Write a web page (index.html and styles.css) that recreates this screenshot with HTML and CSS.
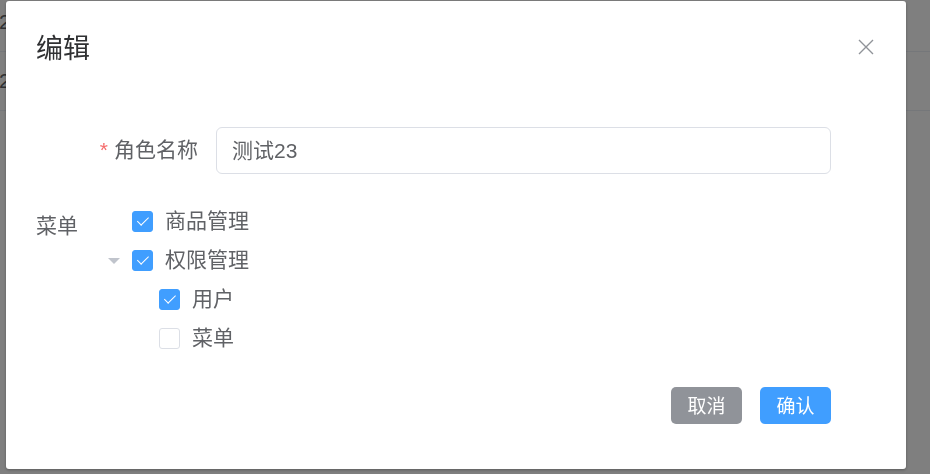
FILE: index.html
```html
<!DOCTYPE html>
<html lang="zh-CN">
<head>
<meta charset="utf-8">
<title>编辑</title>
<link rel="stylesheet" href="styles.css">
</head>
<body>
<div class="page">
  <div class="table">
    <div class="row"><span class="cell">2021-03-12 10:20:31</span></div>
    <div class="row"><span class="cell">2021-03-14 09:12:05</span></div>
  </div>
</div>
<div class="overlay">
  <div class="dialog">
    <div class="dialog-header">
      <span class="dialog-title">编辑</span>
      <button class="close-btn" aria-label="关闭">
        <svg width="16" height="16" viewBox="0 0 16 16"><path d="M1 1L15 15M15 1L1 15" stroke="#909399" stroke-width="1.4" fill="none"/></svg>
      </button>
    </div>
    <div class="dialog-body">
      <div class="form-item">
        <label class="form-label"><span class="req">*</span>角色名称</label>
        <div class="input"><span class="input-text">测试23</span></div>
      </div>
      <div class="menu-item">
        <span class="menu-label">菜单</span>
        <div class="tree">
          <div class="node">
            <span class="expand leaf"></span>
            <span class="cb checked"></span>
            <span class="node-label">商品管理</span>
          </div>
          <div class="node">
            <span class="expand"></span>
            <span class="cb checked"></span>
            <span class="node-label">权限管理</span>
          </div>
          <div class="node level2">
            <span class="expand leaf"></span>
            <span class="cb checked"></span>
            <span class="node-label">用户</span>
          </div>
          <div class="node level2">
            <span class="expand leaf"></span>
            <span class="cb"></span>
            <span class="node-label">菜单</span>
          </div>
        </div>
      </div>
      <div class="dialog-footer">
        <button class="btn btn-info"><span class="btn-text">取消</span></button>
        <button class="btn btn-primary"><span class="btn-text">确认</span></button>
      </div>
    </div>
  </div>
</div>
</body>
</html>
```

FILE: styles.css
```css
* { box-sizing: border-box; }

html, body {
  margin: 0;
  padding: 0;
  background: #ffffff;
  font-family: "Liberation Sans", "Noto Sans CJK SC", sans-serif;
  overflow: hidden;
}

.page {
  width: 930px;
  height: 474px;
}

.table {
  margin-top: -7px;
}

.row {
  height: 59px;
  border-bottom: 1px solid #ebeef5;
  display: flex;
  align-items: center;
}

.cell {
  font-size: 21px;
  color: #606266;
  margin-left: -1px;
}

.overlay {
  position: fixed;
  inset: 0;
  background: rgba(0, 0, 0, 0.5);
}

.dialog {
  position: absolute;
  left: 6px;
  top: 1px;
  width: 900px;
  height: 468px;
  background: #ffffff;
  border-radius: 3px;
  box-shadow: 0 1px 3px rgba(0, 0, 0, 0.3);
}

.dialog-header {
  display: flex;
  justify-content: space-between;
  align-items: flex-start;
  padding: 30px 28px 15px 30px;
}

.dialog-title {
  font-size: 27px;
  line-height: 36px;
  color: #303133;
}

.close-btn {
  width: 24px;
  height: 24px;
  margin-top: 4px;
  padding: 0;
  border: none;
  background: transparent;
  display: flex;
  align-items: center;
  justify-content: center;
}

.dialog-body {
  padding: 45px 75px 0 30px;
}

.form-item {
  display: flex;
  align-items: center;
}

.form-label {
  width: 180px;
  padding-right: 18px;
  padding-bottom: 2px;
  text-align: right;
  font-size: 21px;
  color: #606266;
  line-height: 45px;
}

.req {
  color: #f56c6c;
  margin-right: 6px;
  font-size: 21px;
}

.input {
  flex: 1;
  height: 47px;
  border: 1px solid #dcdfe6;
  border-radius: 6px;
  padding: 0 15px;
  display: flex;
  align-items: center;
  font-size: 21px;
  color: #606266;
}

.input-text {
  margin-bottom: 3px;
}

.menu-item {
  display: flex;
  margin-top: 28px;
}

.menu-label {
  width: 60px;
  font-size: 21px;
  line-height: 39px;
  padding-top: 4px;
  color: #606266;
}

.tree {
  display: flex;
  flex-direction: column;
}

.node {
  height: 39px;
  display: flex;
  align-items: center;
}

.node.level2 {
  padding-left: 27px;
}

.expand {
  width: 36px;
  height: 39px;
  display: flex;
  align-items: center;
  justify-content: center;
}

.expand::before {
  content: "";
  width: 0;
  height: 0;
  border-left: 6px solid transparent;
  border-right: 6px solid transparent;
  border-top: 6px solid #c0c4cc;
  margin-left: -1px;
}

.expand.leaf::before {
  display: none;
}

.cb {
  position: relative;
  width: 21px;
  height: 21px;
  border: 1px solid #dcdfe6;
  border-radius: 3px;
  background: #ffffff;
  margin-right: 12px;
}

.cb.checked {
  background: #409eff;
  border-color: #409eff;
}

.cb.checked::after {
  content: "";
  position: absolute;
  left: 6.5px;
  top: 2px;
  width: 4.5px;
  height: 10px;
  border-right: 1.5px solid #ffffff;
  border-bottom: 1.5px solid #ffffff;
  transform: rotate(45deg);
}

.node-label {
  font-size: 21px;
  color: #606266;
  margin-bottom: 5px;
}

.dialog-footer {
  display: flex;
  justify-content: flex-end;
  gap: 18px;
  margin-top: 29px;
}

.btn {
  width: 71px;
  height: 37px;
  border: none;
  border-radius: 5px;
  color: #ffffff;
  font-family: "Liberation Sans", "Noto Sans CJK SC", sans-serif;
  font-size: 19px;
  padding: 0 0 3px 0;
  display: flex;
  align-items: center;
  justify-content: center;
}

.btn-info {
  background: #909399;
}

.btn-primary {
  background: #409eff;
}
```
